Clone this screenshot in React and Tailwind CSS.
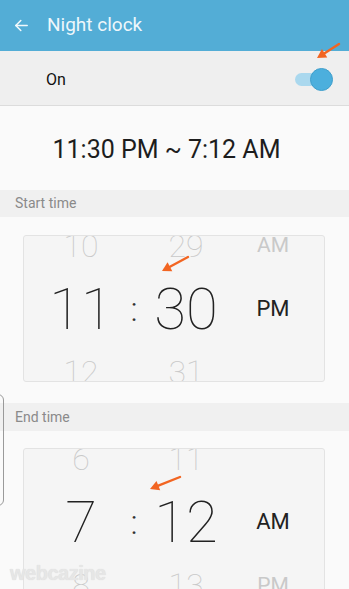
import React from 'react';

const Arrow = ({ className, x1, y1, x2, y2 }) => {
  // orange annotation arrow, head at (x2, y2)
  const dx = x2 - x1;
  const dy = y2 - y1;
  const len = Math.hypot(dx, dy);
  const ux = dx / len;
  const uy = dy / len;
  const bx = x2 - ux * 9;
  const by = y2 - uy * 9;
  const px = -uy * 5;
  const py = ux * 5;
  return (
    <svg className={className} width="40" height="24" viewBox="0 0 40 24">
      <line x1={x1} y1={y1} x2={bx} y2={by} stroke="#f26522" strokeWidth="2.4" strokeLinecap="round" />
      <polygon points={`${x2},${y2} ${bx + px},${by + py} ${bx - px},${by - py}`} fill="#f26522" />
    </svg>
  );
};

const Row = ({ h, m, ap, faded }) => (
  <div className="h-[63px] shrink-0 flex items-center pl-[12px]">
    <div
      className={`w-[90px] text-center font-thin leading-none ${faded ? 'text-[32px] text-[#c9c9c9]' : 'text-[58px] text-[#222]'}`}
    >
      {h}
    </div>
    <div className="w-[16px] text-center text-[34px] leading-none text-[#333] font-light">{faded ? '' : ':'}</div>
    <div
      className={`w-[88px] text-center font-thin leading-none ${faded ? 'text-[32px] text-[#c9c9c9]' : 'text-[58px] text-[#222]'}`}
    >
      {m}
    </div>
    <div className={`w-[86px] text-center leading-none ${faded ? 'text-[21px] text-[#c9c9c9]' : 'text-[22px] text-[#222]'}`}>
      {ap}
    </div>
  </div>
);

const Picker = ({ rows, className = '' }) => (
  <div className={`mx-[23px] w-[302px] border border-[#e3e3e3] rounded-[3px] bg-[#f5f5f5] flex flex-col justify-center overflow-hidden ${className}`}>
    <Row {...rows[0]} faded />
    <Row {...rows[1]} />
    <Row {...rows[2]} faded />
  </div>
);

export default function App() {
  return (
    <div className="relative w-[349px] h-[589px] overflow-hidden bg-[#fafafa]" style={{ fontFamily: 'Roboto, "Liberation Sans", sans-serif' }}>
      <div className="h-[51px] bg-[#53add6] flex items-center">
        <svg className="ml-[13px] mr-[17px]" width="17" height="17" viewBox="0 0 24 24" fill="none" stroke="#f2f9fc" strokeWidth="2.2" strokeLinecap="round" strokeLinejoin="round">
          <path d="M20 12H4" />
          <path d="M11 5l-7 7 7 7" />
        </svg>
        <span className="text-[19px] text-[#eef7fb]">Night clock</span>
      </div>

      <div className="h-[55px] bg-[#efefef] border-b border-[#dcdcdc] flex items-center justify-between pl-[46px] pr-[16px] pt-[3px]">
        <span className="text-[16px] text-[#111]">On</span>
        <div className="relative w-[38px] h-[24px] flex items-center">
          <div className="w-[26px] h-[13px] rounded-full bg-[#aad8ee]" />
          <div className="absolute right-0 w-[23px] h-[23px] rounded-full bg-[#4cafdd] border border-[#3f9fcc]" />
        </div>
      </div>

      <div className="h-[84px] flex items-center justify-center pt-[3px]">
        <span className="text-[25px] text-[#1d1d1d] mr-[16px]">11:30 PM ~ 7:12 AM</span>
      </div>

      <div className="h-[27px] bg-[#f0f0f0] flex items-center pl-[15px]">
        <span className="text-[14px] text-[#8a8a8a]">Start time</span>
      </div>

      <Picker
        className="mt-[18px] h-[147px]"
        rows={[
          { h: '10', m: '29', ap: 'AM' },
          { h: '11', m: '30', ap: 'PM' },
          { h: '12', m: '31', ap: '' },
        ]}
      />

      <div className="mt-[21px] h-[28px] bg-[#f0f0f0] flex items-center pl-[15px]">
        <span className="text-[14px] text-[#8a8a8a]">End time</span>
      </div>

      <Picker
        className="mt-[17px] h-[148px]"
        rows={[
          { h: '6', m: '11', ap: '' },
          { h: '7', m: '12', ap: 'AM' },
          { h: '8', m: '13', ap: 'PM' },
        ]}
      />

      <div className="absolute left-[-8px] top-[394px] w-[12px] h-[112px] border border-[#9a9a9a] rounded-[6px]" />

      <div className="absolute left-[10px] top-[558px] text-[20px] font-bold tracking-[-0.5px] text-[#e6e6e6]" style={{ fontFamily: '"Liberation Sans", Arial, sans-serif', textShadow: '0 0 1px #d6d6d6' }}>
        webcazine
      </div>

      <Arrow className="absolute left-[308px] top-[40px]" x1={31} y1={4} x2={9} y2={18} />
      <Arrow className="absolute left-[154px] top-[253px]" x1={34} y1={4} x2={8} y2={18} />
      <Arrow className="absolute left-[144px] top-[472px]" x1={36} y1={5} x2={6} y2={17} />
    </div>
  );
}
